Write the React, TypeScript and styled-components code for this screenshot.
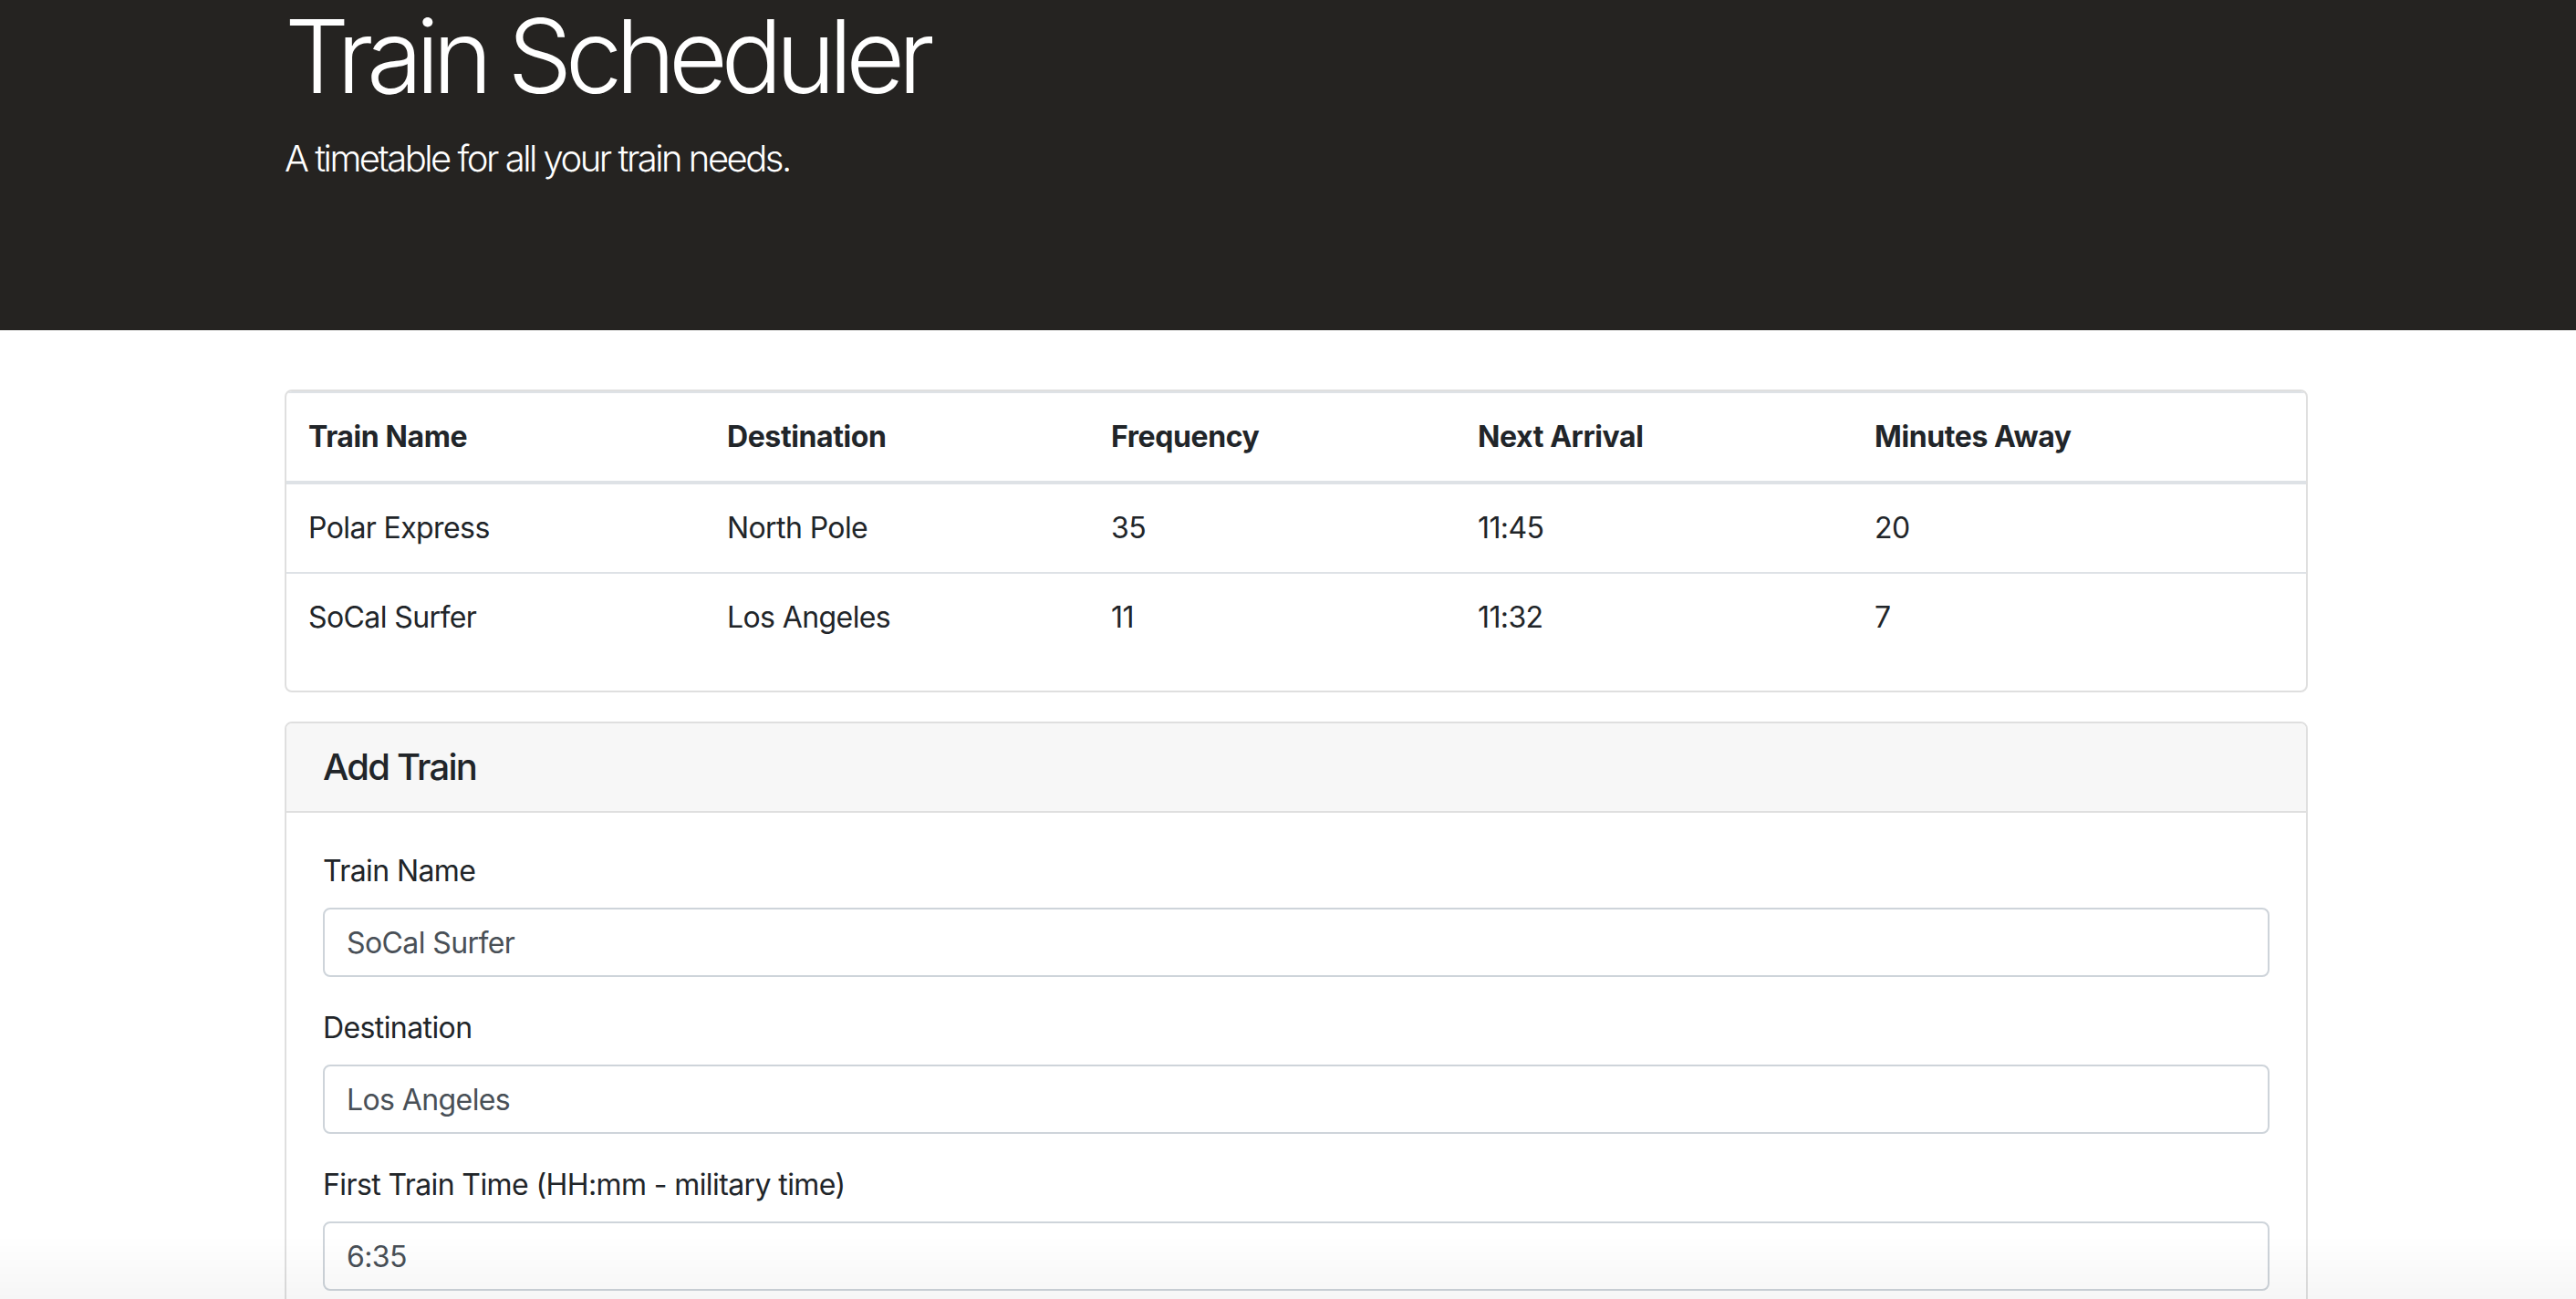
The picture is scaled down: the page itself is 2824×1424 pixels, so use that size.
import React from "react";
import styled, { createGlobalStyle } from "styled-components";

const GlobalStyle = createGlobalStyle`
  html, body {
    margin: 0;
    padding: 0;
    overflow: hidden;
    background: #ffffff;
  }
  body {
    font-family: Inter, "Noto Sans", "Liberation Sans", sans-serif;
    color: #212529;
    font-size: 32px;
    line-height: 1.5;
    letter-spacing: -0.6px;
  }
  * { box-sizing: border-box; }
`;

const Jumbotron = styled.header`
  background: #252321;
  color: #ffffff;
  padding: 0 0 126px;
  margin-bottom: 65px;
`;

const Container = styled.div`
  width: 2218px;
  margin-left: 312px;
`;

const Title = styled.h1`
  margin: 0 0 21px;
  font-size: 112px;
  font-weight: 300;
  line-height: 123px;
  letter-spacing: -7.6px;
`;

const Lead = styled.p`
  margin: 0 0 32px;
  font-size: 40px;
  font-weight: 300;
  line-height: 60px;
  letter-spacing: -2.5px;
`;

const Card = styled.section`
  border: 2px solid #dfdfdf;
  border-radius: 8px;
  background: #fff;
  overflow: hidden;
  margin-bottom: 32px;
`;

const Table = styled.table`
  width: 100%;
  border-collapse: collapse;
  table-layout: fixed;
  margin-bottom: 32px;
`;

const HeadCell = styled.th`
  text-align: left;
  font-weight: 700;
  padding: 24px;
  line-height: 48px;
  letter-spacing: -0.4px;
  border-top: 2px solid #dee2e6;
  border-bottom: 4px solid #dee2e6;
`;

const Cell = styled.td`
  padding: 24px;
  line-height: 48px;
  border-top: 2px solid #dee2e6;
`;

const CardHeader = styled.div`
  background: #f7f7f7;
  border-bottom: 2px solid #dfdfdf;
  padding: 24px 40px;
`;

const CardTitle = styled.h5`
  margin: 0;
  font-size: 40px;
  font-weight: 500;
  line-height: 48px;
  letter-spacing: -1.8px;
`;

const CardBody = styled.div`
  padding: 40px;
`;

const FormGroup = styled.div`
  margin-bottom: 32px;
`;

const Label = styled.label`
  display: block;
  margin-bottom: 16px;
  line-height: 48px;
`;

const Input = styled.input`
  display: block;
  width: 100%;
  height: 76px;
  padding: 12px 24px;
  font-family: inherit;
  font-size: 32px;
  line-height: 48px;
  letter-spacing: -0.6px;
  color: #495057;
  background: #fff;
  border: 2px solid #ced4da;
  border-radius: 8px;
  outline: none;
`;

const BottomShade = styled.div`
  position: fixed;
  left: 0;
  right: 0;
  bottom: 0;
  height: 70px;
  pointer-events: none;
  background: linear-gradient(to bottom, rgba(0, 0, 0, 0), rgba(0, 0, 0, 0.035));
`;

const colWidths = [459, 421, 402, 435, 497];
const headers = ["Train Name", "Destination", "Frequency", "Next Arrival", "Minutes Away"];
const trains = [
  ["Polar Express", "North Pole", "35", "11:45", "20"],
  ["SoCal Surfer", "Los Angeles", "11", "11:32", "7"],
];

const fields = [
  { id: "name", label: "Train Name", value: "SoCal Surfer" },
  { id: "dest", label: "Destination", value: "Los Angeles" },
  { id: "first", label: "First Train Time (HH:mm - military time)", value: "6:35" },
];

export default function App() {
  return (
    <>
      <GlobalStyle />
      <Jumbotron>
        <Container>
          <Title>Train Scheduler</Title>
          <Lead>A timetable for all your train needs.</Lead>
        </Container>
      </Jumbotron>
      <Container>
        <Card>
          <Table>
            <colgroup>
              {colWidths.map((w, i) => (
                <col key={i} style={{ width: w }} />
              ))}
            </colgroup>
            <thead>
              <tr>
                {headers.map((h) => (
                  <HeadCell key={h}>{h}</HeadCell>
                ))}
              </tr>
            </thead>
            <tbody>
              {trains.map((row) => (
                <tr key={row[0]}>
                  {row.map((c, i) => (
                    <Cell key={i}>{c}</Cell>
                  ))}
                </tr>
              ))}
            </tbody>
          </Table>
        </Card>
        <Card>
          <CardHeader>
            <CardTitle>Add Train</CardTitle>
          </CardHeader>
          <CardBody>
            {fields.map((f) => (
              <FormGroup key={f.id}>
                <Label htmlFor={f.id}>{f.label}</Label>
                <Input id={f.id} defaultValue={f.value} />
              </FormGroup>
            ))}
          </CardBody>
        </Card>
      </Container>
      <BottomShade />
    </>
  );
}
